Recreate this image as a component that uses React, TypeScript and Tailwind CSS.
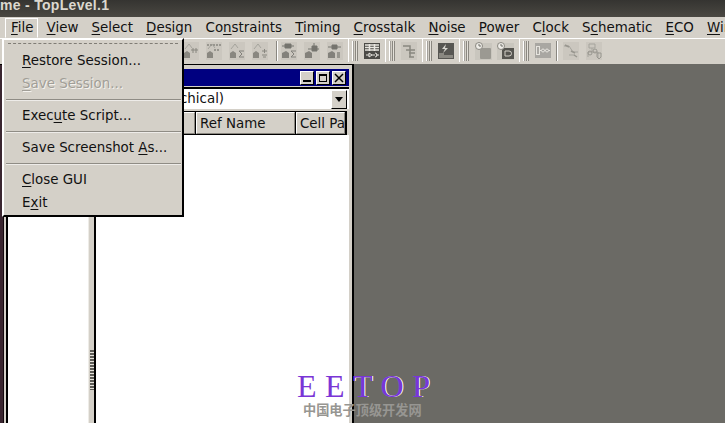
import React from "react";

const menus: [string, string, string][] = [
  ["", "F", "ile"],
  ["", "V", "iew"],
  ["", "S", "elect"],
  ["", "D", "esign"],
  ["Co", "n", "straints"],
  ["", "T", "iming"],
  ["", "C", "rosstalk"],
  ["", "N", "oise"],
  ["", "P", "ower"],
  ["C", "l", "ock"],
  ["S", "c", "hematic"],
  ["", "E", "CO"],
  ["", "W", "indow"],
];

const Mnemonic = ({ parts }: { parts: [string, string, string] }) => (
  <>
    {parts[0]}
    <span className="underline underline-offset-2 decoration-1">{parts[1]}</span>
    {parts[2]}
  </>
);

const Grip = () => (
  <div className="flex gap-px h-[20px] mr-[6px] ml-[3px]">
    <div className="w-[2px] bg-[#a5a29c] border-l border-white" />
    <div className="w-[3px] bg-[#e4e1da] border-x border-x-[#8a8780]" />
  </div>
);

const Tile = ({ children }: { children: React.ReactNode }) => (
  <svg width="16" height="18" viewBox="0 0 16 18" className="opacity-80">
    <rect width="16" height="18" fill="#c9c6be" />
    {children}
  </svg>
);

const Hill = () => (
  <>
    <path d="M1 16V11L4 9L7 11V16Z" fill="#77756f" />
    <path d="M2 7L6 2L9 6" fill="none" stroke="#9b9992" strokeWidth="1" />
  </>
);

const Icon = ({ kind }: { kind: number }) => {
  if (kind === 0)
    return (
      <Tile>
        <Hill />
        <path d="M8 8H15M10 6V11M13 6V11" stroke="#77756f" />
      </Tile>
    );
  if (kind === 1)
    return (
      <Tile>
        <Hill />
        <path d="M1 3H15M8 8H14" stroke="#8a8881" strokeWidth="2" strokeDasharray="2 1" />
      </Tile>
    );
  if (kind === 2)
    return (
      <Tile>
        <Hill />
        <path d="M15 9H10L13 12L10 15H15" fill="none" stroke="#6f6e69" />
      </Tile>
    );
  if (kind === 3)
    return (
      <Tile>
        <Hill />
        <path d="M10 9H15M12.5 7V11M10 13H15M11 15H14" stroke="#77756f" />
      </Tile>
    );
  if (kind === 4)
    return (
      <Tile>
        <path d="M1 16V11L5 9L8 11V16Z" fill="#6f6e69" />
        <path d="M1 4H13M4 2H10V6H4Z" stroke="#5f5e59" fill="#5f5e59" />
        <path d="M15 9H10L13 12L10 15H15" fill="none" stroke="#6f6e69" />
      </Tile>
    );
  if (kind === 5)
    return (
      <Tile>
        <path d="M1 16V11L5 9L8 11V16Z" fill="#6f6e69" />
        <path d="M4 7H15M8 4H13V9H8ZM10 1V5" stroke="#5f5e59" fill="#5f5e59" />
      </Tile>
    );
  if (kind === 6)
    return (
      <Tile>
        <path d="M1 16V11L5 9L8 11V16Z" fill="#6f6e69" />
        <path d="M1 5H14M5 3H10V7H5Z" stroke="#5f5e59" fill="#5f5e59" />
        <path d="M10 16V10H13V16Z" fill="#8a8881" />
      </Tile>
    );
  if (kind === 7)
    return (
      <svg width="16" height="16" viewBox="0 0 16 16">
        <rect width="16" height="16" fill="#4b4a46" />
        <path d="M1 2H15M1 4.500H15M1 7H15M5.500 1V8M10.500 1V8" stroke="#e8e6e0" strokeWidth="1.500" />
        <path d="M2 12H5M5 10V14L8 12L5 10M8 12H11M11 10A2 2 0 0 1 11 14M12 12H15" stroke="#e8e6e0" fill="none" />
      </svg>
    );
  if (kind === 8)
    return (
      <Tile>
        <path d="M2 4H9V15M5 8H14M8 11H14M8 15H13" fill="none" stroke="#77756f" strokeWidth="1.500" />
      </Tile>
    );
  if (kind === 9)
    return (
      <svg width="16" height="16" viewBox="0 0 16 16">
        <rect width="16" height="16" fill="#575652" />
        <path d="M1 15V10H6V12H15V15Z" fill="#8a8881" />
        <path d="M8 1L4 6H7L5 10L10 5H7Z" fill="#d8d6d0" />
      </svg>
    );
  if (kind === 10)
    return (
      <svg width="17" height="18" viewBox="0 0 17 18">
        <rect y="1" width="17" height="17" fill="#c9c6be" />
        <rect x="5" y="6" width="11" height="11" rx="1" fill="#9b9992" />
        <circle cx="4" cy="4" r="3.500" fill="#eeece7" stroke="#8a8881" />
        <path d="M4 2V4H6" fill="none" stroke="#6f6e69" />
      </svg>
    );
  if (kind === 11)
    return (
      <svg width="17" height="18" viewBox="0 0 17 18">
        <rect y="1" width="17" height="17" fill="#c9c6be" />
        <rect x="5" y="6" width="12" height="11" fill="#55544f" />
        <path d="M8 9H12A2.500 2.500 0 0 1 12 14H8Z" fill="none" stroke="#d4d0c8" />
        <circle cx="4" cy="4" r="3.500" fill="#eeece7" stroke="#8a8881" />
        <path d="M4 2V4H6" fill="none" stroke="#6f6e69" />
      </svg>
    );
  if (kind === 12)
    return (
      <svg width="16" height="15" viewBox="0 0 16 15">
        <rect width="16" height="15" fill="#a9a7a2" />
        <rect x="1.500" y="3.500" width="3" height="8" fill="none" stroke="#e6e4de" />
        <path d="M4.500 7.500H15" stroke="#e6e4de" />
        <circle cx="8" cy="7.500" r="1.500" fill="#a9a7a2" stroke="#e6e4de" />
        <circle cx="12" cy="7.500" r="1.500" fill="#a9a7a2" stroke="#e6e4de" />
      </svg>
    );
  if (kind === 13)
    return (
      <Tile>
        <path d="M1 4H6L10 10H15M6 13H12" fill="none" stroke="#9b9992" />
        <path d="M2 3L6 5M8 9L12 11M11 13L14 15" stroke="#8a8881" strokeWidth="1.500" />
      </Tile>
    );
  return (
    <Tile>
      <path d="M3 2H9V6H3ZM6 6V10H2V15M6 10H12V16" fill="none" stroke="#9b9992" />
      <circle cx="4" cy="11" r="2" fill="none" stroke="#8a8881" />
      <circle cx="9" cy="9" r="2" fill="none" stroke="#8a8881" />
      <path d="M11 11H15V15L13 17L11 15Z" fill="none" stroke="#8a8881" />
    </Tile>
  );
};

const VSep = ({ className = "" }: { className?: string }) => (
  <div className={"w-[2px] h-[20px] bg-[#8a8780] border-r border-white " + className} />
);

const WinBtn = ({ children }: { children: React.ReactNode }) => (
  <div className="w-[14px] h-[14px] bg-[#d4d0c8] border border-t-white border-l-white border-r-black border-b-black flex items-center justify-center">
    {children}
  </div>
);

const HeaderCell = ({ className, children }: { className: string; children?: React.ReactNode }) => (
  <div className={"h-full bg-[#d4d0c8] border border-t-white border-l-white border-r-[#8a8780] border-b-[#8a8780] pl-[3px] leading-[21px] overflow-hidden whitespace-nowrap " + className}>
    {children}
  </div>
);

const MenuItem = ({ parts, disabled }: { parts: [string, string, string]; disabled?: boolean }) => (
  <div
    className={
      "h-[23px] leading-[23px] pl-[17px] whitespace-nowrap " +
      (disabled ? "text-[#a19e97] [text-shadow:1px_1px_0_#f4f2ee]" : "text-[#111111]")
    }
  >
    <Mnemonic parts={parts} />
  </div>
);

const MenuSep = () => <div className="mx-[1px] my-[3.500px] h-[2px] border-t border-[#8f8c85] bg-white/60" />;

export default function App() {
  return (
    <div className="relative w-[725px] h-[423px] overflow-hidden flex flex-col bg-[#6b6a65] text-[13.400px] text-[#111111] font-['DejaVu_Sans',sans-serif]">
      {/* window title */}
      <div className="h-[17px] shrink-0 bg-gradient-to-b from-[#353431] to-[#4a4842] text-[#dcd8cf] font-bold text-[14px] leading-[11px] whitespace-nowrap font-['Liberation_Sans',sans-serif] tracking-[0.3px]">
        me - TopLevel.1
      </div>

      {/* menu bar */}
      <div className="h-[21px] shrink-0 bg-[#d4d0c8] flex items-center pl-[11px] gap-[13.200px] whitespace-nowrap">
        {menus.map((m) => (
          <span key={m[1] + m[2]} className="leading-[21px] shrink-0">
            <Mnemonic parts={m} />
          </span>
        ))}
      </div>

      {/* toolbar */}
      <div className="h-[26px] shrink-0 bg-[#d4d0c8] border-t border-white flex items-center border-b-2 border-b-[#d4d0c8]">
        <div className="w-[349px] h-full border-r border-white flex items-center justify-end pr-[5px] gap-[7px]">
          <Icon kind={0} />
          <Icon kind={1} />
          <Icon kind={2} />
          <Icon kind={3} />
          <VSep className="ml-[1px] -mr-[4px]" />
          <Icon kind={4} />
          <Icon kind={5} />
          <Icon kind={6} />
        </div>
        <div className="w-[37px] h-full border-r border-white flex items-center">
          <Grip />
          <Icon kind={7} />
        </div>
        <div className="w-[37px] h-full border-r border-white flex items-center">
          <Grip />
          <Icon kind={8} />
        </div>
        <div className="w-[37px] h-full border-r border-white flex items-center">
          <Grip />
          <Icon kind={9} />
        </div>
        <div className="w-[60px] h-full border-r border-white flex items-center gap-[5px]">
          <Grip />
          <div className="-ml-[5px]">
            <Icon kind={10} />
          </div>
          <Icon kind={11} />
        </div>
        <div className="flex h-full items-center gap-[5px]">
          <Grip />
          <div className="-ml-[5px]">
            <Icon kind={12} />
          </div>
          <VSep />
          <Icon kind={13} />
          <div className="ml-[2px]">
            <Icon kind={14} />
          </div>
        </div>
      </div>

      {/* body */}
      <div className="flex-1 flex min-h-0">
        <div className="w-[352px] shrink-0 flex flex-col">
          <div className="h-[1px] bg-black" />
          <div className="flex-1 flex min-h-0">
            <div className="w-[4px] bg-[#3a2630] border-r border-[#14090e]" />
            <div className="w-[2px] bg-[#d4d0c8]" />
            <div className="w-[2px] bg-black" />
            <div className="w-[80px] bg-white" />
            <div className="w-[6px] bg-[#d4d0c8] border-l border-[#eeece7] flex flex-col pl-[1px]">
              <div className="mt-[285px] h-[40px] bg-[repeating-linear-gradient(#5e5d58_0,#5e5d58_2px,#e6e3dc_2px,#e6e3dc_3px)]" />
            </div>
            <div className="w-[2px] bg-black" />
            {/* instance panel */}
            <div className="flex-1 flex flex-col bg-[#d4d0c8] border-r-[3px] border-[#d4d0c8] pt-[4px]">
              <div className="h-[17px] shrink-0 bg-[#000080] flex items-center justify-end pr-[3px] gap-[2px]">
                <WinBtn>
                  <div className="w-[8px] h-[2px] mt-[6px] bg-black" />
                </WinBtn>
                <WinBtn>
                  <div className="w-[8px] h-[8px] border border-t-2 border-black" />
                </WinBtn>
                <WinBtn>
                  <svg width="10" height="10" viewBox="0 0 10 10">
                    <path d="M1 1L9 9M9 1L1 9" stroke="#000" strokeWidth="1.500" />
                  </svg>
                </WinBtn>
              </div>
              <div className="h-[22px] mt-px shrink-0 bg-white border-t-2 border-black flex items-center justify-between pr-[2px] leading-[18px]">
                <span className="pl-[84px] -mt-[1px]">chical)</span>
                <div className="w-[16px] h-[19px] bg-[#d4d0c8] border border-t-white border-l-white border-r-black border-b-black flex items-center justify-center">
                  <div className="w-0 h-0 border-x-[4px] border-x-transparent border-t-[5px] border-t-black" />
                </div>
              </div>
              <div className="h-[24px] mt-[2px] shrink-0 pr-[2px] bg-[#d4d0c8]">
                <div className="h-full bg-black py-[1px] pr-[1px] flex items-stretch gap-px">
                  <HeaderCell className="w-[99px]" />
                  <HeaderCell className="w-[99px]">Ref Name</HeaderCell>
                  <HeaderCell className="w-[49px]">Cell Pa</HeaderCell>
                </div>
              </div>
              <div className="flex-1 bg-white" />
            </div>
          </div>
        </div>
        <div className="w-[2px] shrink-0 bg-black" />
        <div className="flex-1 bg-[#6b6a65]" />
      </div>

      {/* File menu open */}
      <div className="absolute left-[5px] top-[18px] w-[33px] h-[20px] border-t border-l border-white border-r border-b border-r-white border-b-[#d4d0c8] pl-[5px] leading-[18px] bg-[#d4d0c8]">
        <Mnemonic parts={["", "F", "ile"]} />
      </div>
      <div className="absolute left-[2px] top-[38px] w-[182px] h-[179px] pl-[1px] border-t-2 border-l-2 border-t-white border-l-white border-r-2 border-b-2 border-r-black border-b-black bg-[#d4d0c8] pt-[9px]">
        <div className="absolute left-[4px] right-[4px] top-[3px] h-[1px] border-t border-dashed border-[#7f7c75]" />
        <MenuItem parts={["", "R", "estore Session..."]} />
        <MenuItem parts={["", "S", "ave Session..."]} disabled />
        <MenuSep />
        <MenuItem parts={["Exec", "u", "te Script..."]} />
        <MenuSep />
        <MenuItem parts={["Save Screenshot ", "A", "s..."]} />
        <MenuSep />
        <MenuItem parts={["", "C", "lose GUI"]} />
        <MenuItem parts={["E", "x", "it"]} />
      </div>

      {/* watermark */}
      <div className="absolute left-[297px] top-[371px] flex flex-col items-start pointer-events-none">
        <div className="text-[32px] leading-[30px] tracking-[8.500px] text-[#7a35d6] font-['Liberation_Serif',serif] whitespace-nowrap [text-shadow:1px_0_0_#ffffff]">
          EETOP
        </div>
        <div className="ml-[6px] mt-[1px] text-[13.200px] leading-[16px] font-bold text-[#979692] font-['Noto_Sans_CJK_SC',sans-serif] whitespace-nowrap">
          中国电子顶级开发网
        </div>
      </div>
    </div>
  );
}
